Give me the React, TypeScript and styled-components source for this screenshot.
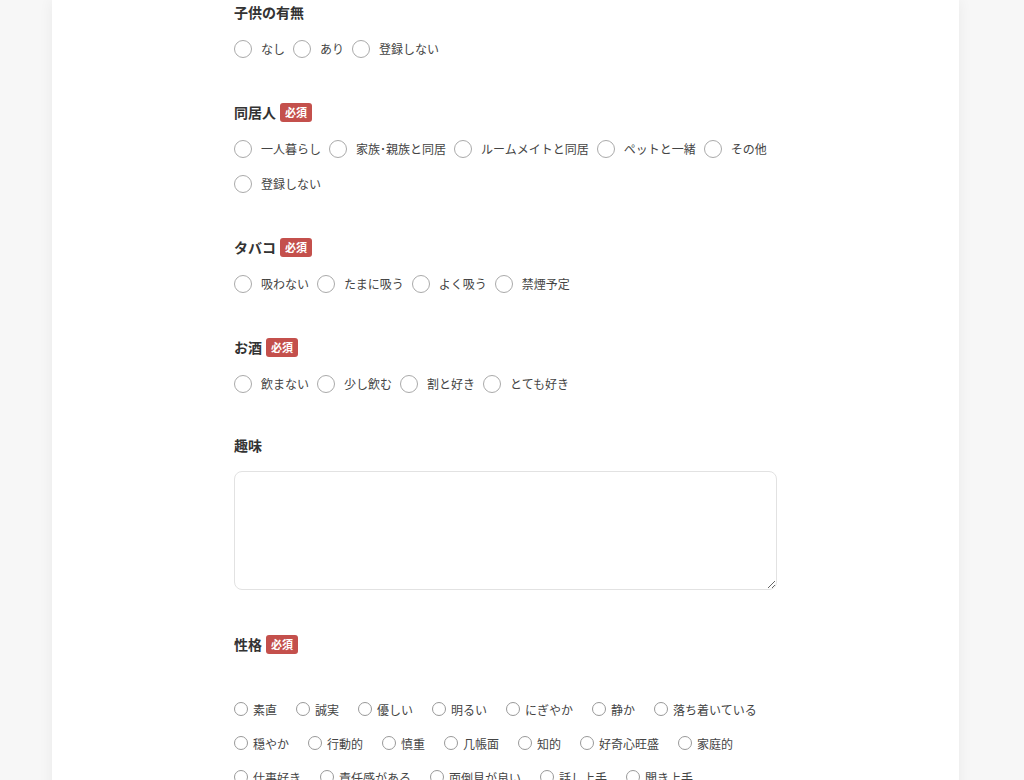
import React from 'react';
import styled, { createGlobalStyle } from 'styled-components';

type Group = {
  title: string;
  required?: boolean;
  options: string[];
};

const radioGroups: Group[] = [
  { title: '子供の有無', options: ['なし', 'あり', '登録しない'] },
  {
    title: '同居人',
    required: true,
    options: ['一人暮らし', '家族･親族と同居', 'ルームメイトと同居', 'ペットと一緒', 'その他', '登録しない'],
  },
  { title: 'タバコ', required: true, options: ['吸わない', 'たまに吸う', 'よく吸う', '禁煙予定'] },
  { title: 'お酒', required: true, options: ['飲まない', '少し飲む', '割と好き', 'とても好き'] },
];

const personality = [
  '素直', '誠実', '優しい', '明るい', 'にぎやか', '静か', '落ち着いている',
  '穏やか', '行動的', '慎重', '几帳面', '知的', '好奇心旺盛', '家庭的',
  '仕事好き', '責任感がある', '面倒見が良い', '話し上手', '聞き上手',
];

export default function App() {
  return (
    <>
      <GlobalStyle />
      <Page>
        <Card>
          <Form>
            {radioGroups.map((g) => (
              <Section key={g.title}>
                <Heading>
                  {g.title}
                  {g.required && <Badge>必須</Badge>}
                </Heading>
                <Options>
                  {g.options.map((o) => (
                    <Option key={o}>
                      <Circle type="radio" name={g.title} />
                      <span>{o}</span>
                    </Option>
                  ))}
                </Options>
              </Section>
            ))}

            <Section $gap={34}>
              <Heading>趣味</Heading>
              <TextArea />
            </Section>

            <Section>
              <Heading>
                性格<Badge>必須</Badge>
              </Heading>
              <SmallOptions>
                {personality.map((p) => (
                  <SmallOption key={p}>
                    <SmallCircle type="checkbox" />
                    <span>{p}</span>
                  </SmallOption>
                ))}
              </SmallOptions>
            </Section>
          </Form>
        </Card>
      </Page>
    </>
  );
}

const GlobalStyle = createGlobalStyle`
  html, body {
    margin: 0;
    padding: 0;
    background: #f7f7f7;
    overflow: hidden;
  }
  body {
    font-family: 'Noto Sans CJK JP', 'Noto Sans', sans-serif;
    color: #333;
  }
`;

const Page = styled.div`
  width: 100%;
  height: 780px;
  background: #f7f7f7;
  overflow: hidden;
`;

const Card = styled.div`
  margin-left: 52px;
  width: 907px;
  min-height: 780px;
  background: #fff;
  box-shadow: 0 0 14px rgba(0, 0, 0, 0.06);
`;

const Form = styled.div`
  width: 543px;
  margin: 0 auto;
  padding-top: 2px;
`;

const Section = styled.section<{ $gap?: number }>`
  margin-top: ${(p) => (p.$gap ?? 36) - 36}px;
  margin-bottom: 36px;
`;

const Heading = styled.h3`
  display: flex;
  align-items: center;
  gap: 4px;
  height: 20px;
  margin: 0 0 9px;
  font-size: 14px;
  font-weight: 700;
  color: #333;
  line-height: 20px;
`;

const Badge = styled.span`
  display: inline-flex;
  align-items: center;
  justify-content: center;
  width: 32px;
  height: 19px;
  border-radius: 3px;
  background: #c4504c;
  color: #fff;
  font-size: 11px;
  font-weight: 700;
`;

const Options = styled.div`
  display: flex;
  flex-wrap: wrap;
`;

const Option = styled.label`
  display: flex;
  align-items: center;
  height: 35px;
  margin-right: 8px;
  font-size: 12px;
  color: #444;
  span {
    margin-left: 9px;
  }
`;

const Circle = styled.input`
  appearance: none;
  margin: 0;
  width: 18px;
  height: 18px;
  border: 1px solid #aaa;
  border-radius: 50%;
  background: #fff;
`;

const TextArea = styled.textarea`
  display: block;
  box-sizing: border-box;
  width: 543px;
  height: 119px;
  margin-top: 16px;
  margin-bottom: 44px;
  border: 1px solid #e2e2e2;
  border-radius: 8px;
  resize: vertical;
`;

const SmallOptions = styled.div`
  display: flex;
  flex-wrap: wrap;
  margin-top: 38px;
`;

const SmallOption = styled.label`
  display: flex;
  align-items: center;
  height: 34px;
  margin-right: 19px;
  font-size: 12px;
  color: #444;
  span {
    margin-left: 5px;
  }
`;

const SmallCircle = styled.input`
  appearance: none;
  margin: 0;
  width: 14px;
  height: 14px;
  border: 1px solid #999;
  border-radius: 50%;
  background: #fff;
`;
